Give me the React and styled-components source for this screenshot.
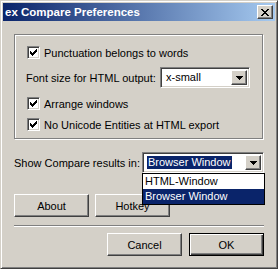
import React from "react";
import styled, { createGlobalStyle } from "styled-components";

const Global = createGlobalStyle`
  html, body { margin: 0; padding: 0; background: #D4D0C8; }
  body { font-family: "Liberation Sans", Arial, sans-serif; font-size: 11px; color: #000; }
  * { box-sizing: border-box; }
`;

const Window = styled.div`
  position: relative;
  width: 278px;
  height: 269px;
  background: #D4D0C8;
  border: 1px solid;
  border-color: #D4D0C8 #404040 #404040 #D4D0C8;
  box-shadow: inset 1px 1px #fff, inset -1px -1px #808080;
  padding: 2px;
  display: flex;
  flex-direction: column;
`;

const TitleBar = styled.div`
  height: 18px;
  display: flex;
  align-items: center;
  padding-left: 2px;
  padding-right: 2px;
  background: linear-gradient(to right, #0A246A, #A6CAF0);
`;

const Title = styled.div`
  flex: 1;
  color: #fff;
  font-weight: bold;
  font-size: 11.5px;
`;

const RaisedBtn = styled.div`
  background: #D4D0C8;
  border: 1px solid;
  border-color: #fff #404040 #404040 #fff;
  box-shadow: inset -1px -1px #808080;
  display: flex;
  align-items: center;
  justify-content: center;
`;

const CloseBtn = styled(RaisedBtn)`
  width: 16px;
  height: 14px;
`;

const Body = styled.div`
  flex: 1;
  display: flex;
  flex-direction: column;
  padding: 13px 9px 0 11px;
  position: relative;
`;

const Group = styled.div`
  width: 249px;
  border: 1px solid #808080;
  box-shadow: inset 1px 1px #fff, 1px 1px #fff;
  padding: 11px 0 7px 12px;
  display: flex;
  flex-direction: column;
`;

const Row = styled.div`
  display: flex;
  align-items: center;
  height: ${(p) => p.$h || 13}px;
  margin-top: ${(p) => p.$mt || 0}px;
`;

const Box = styled.div`
  width: 13px;
  height: 13px;
  flex: none;
  background: #fff;
  border: 1px solid;
  border-color: #808080 #fff #fff #808080;
  box-shadow: inset 1px 1px #404040, inset -1px -1px #D4D0C8;
  padding: 2px;
  display: flex;
`;

const LabelText = styled.span`
  margin-left: ${(p) => p.$ml || 0}px;
  width: ${(p) => (p.$w ? p.$w + "px" : "auto")};
  flex: none;
  white-space: nowrap;
`;

const Combo = styled.div`
  width: ${(p) => p.$w}px;
  height: 21px;
  background: #fff;
  border: 1px solid;
  border-color: #808080 #fff #fff #808080;
  box-shadow: inset 1px 1px #404040, inset -1px -1px #D4D0C8;
  padding: 2px;
  display: flex;
  align-items: stretch;
`;

const ComboText = styled.div`
  flex: 1;
  display: flex;
  align-items: center;
  padding-left: 2px;
`;

const Sel = styled.span`
  background: ${(p) => (p.$on ? "#0A246A" : "transparent")};
  color: ${(p) => (p.$on ? "#fff" : "#000")};
  padding: 0 1px;
  line-height: 13px;
`;

const ArrowBtn = styled(RaisedBtn)`
  width: 16px;
  flex: none;
`;

const List = styled.div`
  position: absolute;
  left: 139px;
  top: 152px;
  width: 123px;
  background: #fff;
  border: 1px solid #000;
  display: flex;
  flex-direction: column;
`;

const Item = styled.div`
  height: 15px;
  line-height: 15px;
  padding-left: 2px;
  background: ${(p) => (p.$on ? "#0A246A" : "#fff")};
  color: ${(p) => (p.$on ? "#fff" : "#000")};
`;

const ButtonRow = styled.div`
  display: flex;
  gap: ${(p) => p.$gap || 6}px;
  margin-top: ${(p) => p.$mt || 0}px;
  justify-content: ${(p) => (p.$end ? "flex-end" : "flex-start")};
  width: 250px;
`;

const Button = styled(RaisedBtn)`
  width: 75px;
  height: 23px;
  ${(p) =>
    p.$default &&
    `border-color: #000; box-shadow: inset 1px 1px #fff, inset -1px -1px #404040, inset -2px -2px #808080;`}
`;

const Separator = styled.div`
  width: 250px;
  height: 2px;
  border-top: 1px solid #808080;
  border-bottom: 1px solid #fff;
  margin-top: 8px;
`;

const Pixels = ({ rows, w, h }) => (
  <svg width={w} height={h} shapeRendering="crispEdges" style={{ display: "block" }}>
    {rows.map((r, y) =>
      r.split("").map((c, x) =>
        c === "x" ? <rect key={x + "-" + y} x={x} y={y} width="1" height="1" fill="#000" /> : null
      )
    )}
  </svg>
);

const CHECK = ["......x", ".....xx", "x...xxx", "xx.xxx.", "xxxxx..", ".xxx...", "..x...."];
const CLOSE = ["xx....xx", ".xx..xx.", "..xxxx..", "...xx...", "..xxxx..", ".xx..xx.", "xx....xx"];
const ARROW = ["xxxxxxx", ".xxxxx.", "..xxx..", "...x..."];

const Check = () => (
  <Box>
    <Pixels rows={CHECK} w={7} h={7} />
  </Box>
);

const Arrow = () => (
  <ArrowBtn>
    <Pixels rows={ARROW} w={7} h={4} />
  </ArrowBtn>
);

export default function App() {
  return (
    <>
      <Global />
      <Window>
        <TitleBar>
          <Title>ex Compare Preferences</Title>
          <CloseBtn>
            <Pixels rows={CLOSE} w={8} h={7} />
          </CloseBtn>
        </TitleBar>
        <Body>
          <Group>
            <Row>
              <Check />
              <LabelText $ml={4}>Punctuation belongs to words</LabelText>
            </Row>
            <Row $h={21} $mt={8}>
              <LabelText $w={134} $ml={-1}>Font size for HTML output:</LabelText>
              <Combo $w={90}>
                <ComboText>
                  <Sel>x-small</Sel>
                </ComboText>
                <Arrow />
              </Combo>
            </Row>
            <Row $mt={9}>
              <Check />
              <LabelText $ml={4}>Arrange windows</LabelText>
            </Row>
            <Row $mt={8}>
              <Check />
              <LabelText $ml={4}>No Unicode Entities at HTML export</LabelText>
            </Row>
          </Group>
          <Row $h={21} $mt={13}>
            <LabelText $w={128}>Show Compare results in:</LabelText>
            <Combo $w={122}>
              <ComboText>
                <Sel $on>Browser Window</Sel>
              </ComboText>
              <Arrow />
            </Combo>
          </Row>
          <ButtonRow $mt={21}>
            <Button>About</Button>
            <Button>Hotkey</Button>
          </ButtonRow>
          <Separator />
          <ButtonRow $mt={6} $end $gap={7}>
            <Button>Cancel</Button>
            <Button $default>OK</Button>
          </ButtonRow>
          <List>
            <Item>HTML-Window</Item>
            <Item $on>Browser Window</Item>
          </List>
        </Body>
      </Window>
    </>
  );
}
